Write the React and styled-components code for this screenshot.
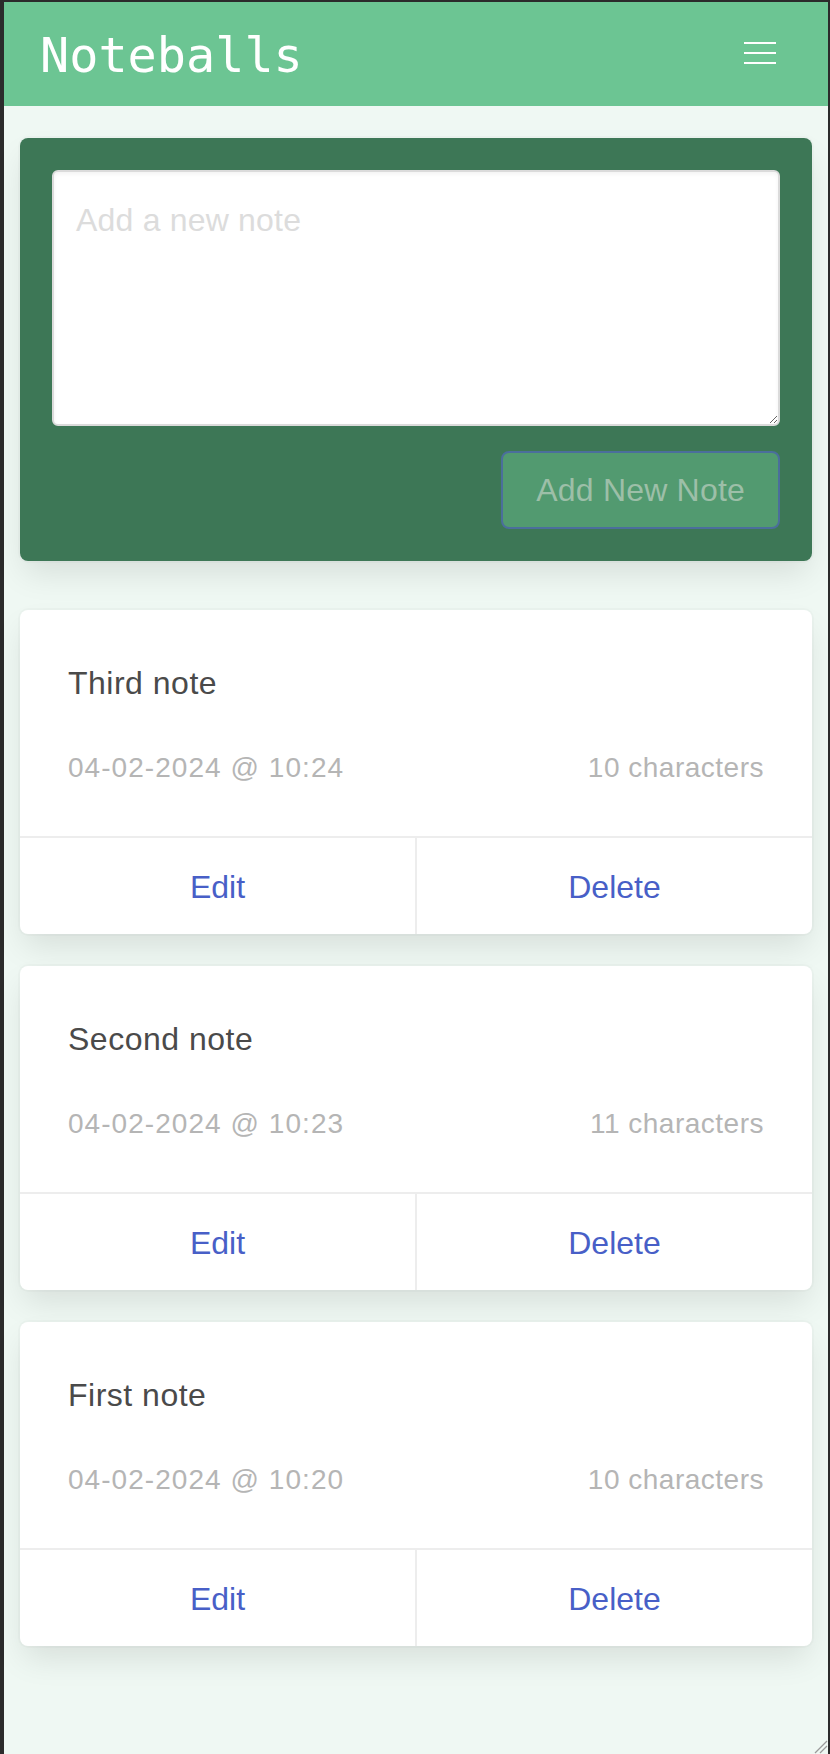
import React from "react";
import styled, { createGlobalStyle } from "styled-components";

const GlobalStyle = createGlobalStyle`
  html, body {
    margin: 0;
    padding: 0;
    background: #2b2b2b;
  }
  body {
    font-family: "Liberation Sans", Arial, sans-serif;
  }
  * { box-sizing: border-box; }
`;

const Frame = styled.div`
  padding: 2px 2px 0 4px;
  min-height: 1754px;
  display: flex;
`;

const Page = styled.div`
  position: relative;
  flex: 1;
  min-height: 1752px;
  background: #eff8f3;
`;

const Navbar = styled.nav`
  height: 104px;
  background: #6cc593;
  display: flex;
  align-items: center;
  justify-content: space-between;
  padding: 0 16px;
`;

const Brand = styled.div`
  font-family: "DejaVu Sans Mono", "Liberation Mono", monospace;
  font-size: 48.5px;
  line-height: 48px;
  color: #ffffff;
  padding-left: 20px;
  padding-top: 2px;
`;

const Burger = styled.button`
  width: 104px;
  height: 104px;
  border: 0;
  background: transparent;
  padding: 0 0 2px 0;
  display: flex;
  flex-direction: column;
  align-items: center;
  justify-content: center;
  gap: 8px;
  cursor: pointer;
`;

const BurgerLine = styled.span`
  display: block;
  width: 32px;
  height: 2px;
  background: #ffffff;
`;

const Main = styled.main`
  padding: 32px 16px;
  display: flex;
  flex-direction: column;
`;

const AddCard = styled.section`
  background: #3d7756;
  border-radius: 8px;
  padding: 32px;
  margin-bottom: 49px;
  box-shadow: 0 16px 32px -4px rgba(10, 10, 10, 0.1), 0 0 0 2px rgba(10, 10, 10, 0.02);
`;

const Field = styled.div`
  margin-bottom: 25px;
  display: flex;
`;

const TextArea = styled.textarea`
  width: 100%;
  height: 256px;
  border: 2px solid #dbdbdb;
  border-radius: 6px;
  padding: 24px 22px 20px;
  font-family: "Liberation Sans", Arial, sans-serif;
  font-size: 32px;
  line-height: 1.5;
  letter-spacing: 0.2px;
  color: #363636;
  background: #ffffff;
  box-shadow: inset 0 2px 4px rgba(10, 10, 10, 0.05);
  resize: vertical;
  outline: none;
  &::placeholder {
    color: #dcdcdc;
  }
`;

const Actions = styled.div`
  display: flex;
  justify-content: flex-end;
`;

const AddButton = styled.button`
  height: 78px;
  padding: 0 33px;
  border: 2px solid #4b6e9c;
  border-radius: 8px;
  background: #529a70;
  color: #9dbfa8;
  font-family: "Liberation Sans", Arial, sans-serif;
  font-size: 32px;
  line-height: 1.5;
  letter-spacing: 0.2px;
  cursor: not-allowed;
`;

const NoteCard = styled.article`
  background: #ffffff;
  border-radius: 8px;
  margin-bottom: 32px;
  box-shadow: 0 16px 32px -4px rgba(10, 10, 10, 0.1), 0 0 0 2px rgba(10, 10, 10, 0.02);
  overflow: hidden;
`;

const CardContent = styled.div`
  padding: 49px 48px 47px;
`;

const NoteText = styled.div`
  font-size: 32px;
  line-height: 48px;
  letter-spacing: 0.5px;
  color: #4a4a4a;
`;

const Meta = styled.div`
  margin-top: 40px;
  display: flex;
  justify-content: space-between;
  font-size: 28px;
  line-height: 42px;
  color: #b5b5b5;
`;

const MetaItem = styled.span`
  letter-spacing: ${(p) => (p.$numeric ? "1.05px" : "0.5px")};
`;

const CardFooter = styled.footer`
  display: flex;
  border-top: 2px solid #ededed;
`;

const FooterItem = styled.a`
  flex: 1;
  padding: 25px 24px 23px;
  text-align: center;
  font-size: 32px;
  line-height: 48px;
  color: #485fc7;
  text-decoration: none;
  cursor: pointer;
  & + & {
    border-left: 2px solid #ededed;
  }
`;

const Grip = styled.svg`
  position: absolute;
  right: 0;
  bottom: 0;
  width: 16px;
  height: 16px;
`;

const notes = [
  { id: 3, content: "Third note", date: "04-02-2024 @ 10:24" },
  { id: 2, content: "Second note", date: "04-02-2024 @ 10:23" },
  { id: 1, content: "First note", date: "04-02-2024 @ 10:20" },
];

export default function App() {
  return (
    <>
      <GlobalStyle />
      <Frame>
        <Page>
          <Navbar>
            <Brand>Noteballs</Brand>
            <Burger aria-label="menu">
              <BurgerLine />
              <BurgerLine />
              <BurgerLine />
            </Burger>
          </Navbar>
          <Main>
            <AddCard>
              <Field>
                <TextArea placeholder="Add a new note" />
              </Field>
              <Actions>
                <AddButton disabled>Add New Note</AddButton>
              </Actions>
            </AddCard>
            {notes.map((n) => (
              <NoteCard key={n.id}>
                <CardContent>
                  <NoteText>{n.content}</NoteText>
                  <Meta>
                    <MetaItem $numeric>{n.date}</MetaItem>
                    <MetaItem>{n.content.length} characters</MetaItem>
                  </Meta>
                </CardContent>
                <CardFooter>
                  <FooterItem>Edit</FooterItem>
                  <FooterItem>Delete</FooterItem>
                </CardFooter>
              </NoteCard>
            ))}
          </Main>
          <Grip viewBox="0 0 16 16">
            <line x1="15" y1="3" x2="3" y2="15" stroke="#9a9a9a" strokeWidth="1.2" />
            <line x1="15" y1="8" x2="8" y2="15" stroke="#9a9a9a" strokeWidth="1.2" />
          </Grip>
        </Page>
      </Frame>
    </>
  );
}
